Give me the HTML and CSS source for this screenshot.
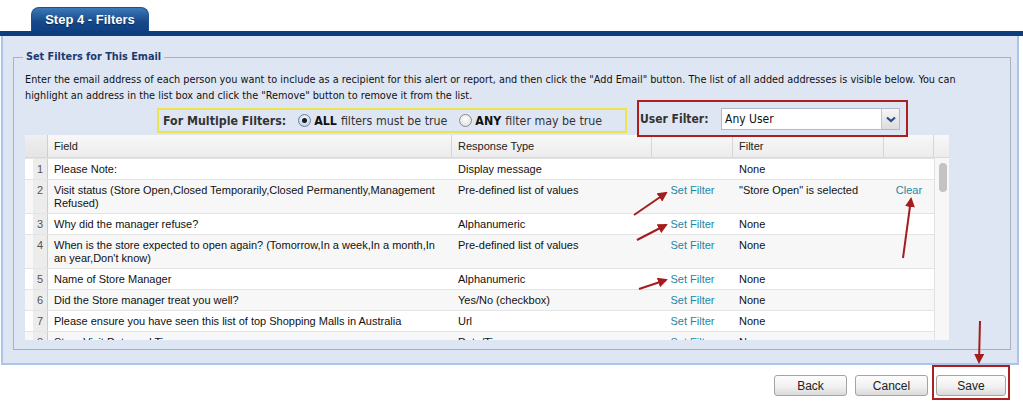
FILE: index.html
```html
<!DOCTYPE html>
<html lang="en">
<head>
	<meta charset="UTF-8">
	<title>Step 4 - Filters</title>
	<link rel="stylesheet" href="styles.css">
</head>
<body>
	<header class="tabs">
		<span class="tab">Step 4 - Filters</span>
	</header>
	<main class="panel">
		<fieldset class="filters">
			<legend>Set Filters for This Email</legend>
			<p class="intro">Enter the email address of each person you want to include as a recipient for this alert or report, and then click the "Add Email" button. The list of all added addresses is visible below. You can<br>highlight an address in the list box and click the "Remove" button to remove it from the list.</p>
			<div class="filter-row">
				<div class="multi">
					<b>For Multiple Filters:</b>
					<label><span class="radio on"></span><b>ALL</b> filters must be true</label>
					<label><span class="radio"></span><b>ANY</b> filter may be true</label>
				</div>
				<div class="user">
					<b>User Filter:</b>
					<div class="select">
						<span class="value">Any User</span>
						<span class="drop"><svg width="18" height="20" viewBox="0 0 18 20"><path d="M5 8.5l4 3.5l4-3.5" fill="none" stroke="#2c4b8c" stroke-width="2.2"/></svg></span>
					</div>
				</div>
			</div>
			<section class="grid">
				<div class="grid-head">
					<span class="num"></span>
					<span>Field</span>
					<span>Response Type</span>
					<span></span>
					<span>Filter</span>
					<span></span>
					<span class="last"></span>
				</div>
				<div class="grid-body">
					<div class="rows">
						<div class="row"><span class="num">1</span><span>Please Note:</span><span>Display message</span><span></span><span>None</span><span></span></div>
						<div class="row"><span class="num">2</span><span>Visit status (Store Open,Closed Temporarily,Closed Permanently,Management Refused)</span><span>Pre-defined list of values</span><a class="link">Set Filter</a><span>"Store Open" is selected</span><a class="link">Clear</a></div>
						<div class="row"><span class="num">3</span><span>Why did the manager refuse?</span><span>Alphanumeric</span><a class="link">Set Filter</a><span>None</span><span></span></div>
						<div class="row"><span class="num">4</span><span>When is the store expected to open again? (Tomorrow,In a week,In a month,In an year,Don't know)</span><span>Pre-defined list of values</span><a class="link">Set Filter</a><span>None</span><span></span></div>
						<div class="row"><span class="num">5</span><span>Name of Store Manager</span><span>Alphanumeric</span><a class="link">Set Filter</a><span>None</span><span></span></div>
						<div class="row"><span class="num">6</span><span>Did the Store manager treat you well?</span><span>Yes/No (checkbox)</span><a class="link">Set Filter</a><span>None</span><span></span></div>
						<div class="row"><span class="num">7</span><span>Please ensure you have seen this list of top Shopping Malls in Australia</span><span>Url</span><a class="link">Set Filter</a><span>None</span><span></span></div>
						<div class="row"><span class="num">8</span><span>Store Visit Date and Time</span><span>Date/Time</span><a class="link">Set Filter</a><span>None</span><span></span></div>
					</div>
					<div class="scroll"><span class="thumb"></span></div>
				</div>
			</section>
		</fieldset>
	</main>
	<nav class="actions">
		<button>Back</button>
		<button>Cancel</button>
		<div class="mark"><button>Save</button></div>
	</nav>
	<svg class="notes" width="1023" height="402" viewBox="0 0 1023 402">
		<defs>
			<marker id="head" viewBox="0 0 10 10" refX="8" refY="5" markerWidth="5" markerHeight="5" orient="auto">
				<path d="M0 0L10 5L0 10z" fill="#a61c1c"/>
			</marker>
		</defs>
		<g stroke="#a61c1c" stroke-width="2" fill="none" marker-end="url(#head)">
			<line x1="634" y1="215" x2="666" y2="193"/>
			<line x1="637" y1="240" x2="666" y2="225"/>
			<line x1="639" y1="289" x2="666" y2="280"/>
			<line x1="903" y1="258" x2="911" y2="199"/>
			<line x1="980" y1="321" x2="979" y2="362"/>
		</g>
	</svg>
</body>
</html>
```

FILE: styles.css
```css
* {margin:0;padding:0;box-sizing:border-box;}
body {width:1023px;height:402px;overflow:hidden;position:relative;background:#fff;font-family:"Liberation Sans", Arial, sans-serif;font-size:11px;color:#111;}

.tabs {height:36px;padding:7px 0 0 31px;border-bottom:5px solid #0e3d7f;display:flex;}
.tab {width:118px;height:24px;border-radius:8px 8px 0 0;border:1px solid #20508f;border-bottom:none;background:linear-gradient(#3c78b7, #17498a 60%, #0f4083);color:#fff;font-weight:bold;font-size:13px;line-height:23px;text-align:center;text-shadow:0 1px 1px #082a5c;}

.panel {width:1018px;margin-left:1px;padding:14px 6px 13px 10px;background:#dfe6f3;border:2px solid #a9c5ea;border-top:none;}
.filters {border:1px solid #a8b1c4;padding:0 10px 9px 11px;font-family:"DejaVu Sans Condensed", "DejaVu Sans", sans-serif;font-stretch:condensed;}
.filters legend {padding:0 3px;margin-left:-2px;font-size:10.8px;line-height:14px;font-weight:bold;color:#1c3a70;}
.intro {margin-top:8px;font-size:10.8px;line-height:16px;color:#111;}

.filter-row {display:flex;align-items:flex-start;gap:10px;height:35px;margin-top:-4px;position:relative;z-index:2;}
.multi {margin:8px 0 0 132px;width:470px;height:25px;border:2px solid #ece44c;display:flex;align-items:center;padding-left:4px;font-size:12.3px;color:#333;}
.multi b {color:#333;}
.multi label {display:flex;align-items:center;margin-left:12px;}
.multi label b {margin-right:4px;color:#111;}
.radio {width:13px;height:13px;border-radius:50%;border:1px solid #8c8c8c;background:radial-gradient(circle at 50% 35%, #fff, #d8d8d8);margin-right:3px;position:relative;}
.radio.on {border-color:#6a7f9e;background:radial-gradient(circle at 50% 35%, #f4f8ff, #b9cbe6);}
.radio.on::after {content:"";position:absolute;left:3px;top:3px;width:5px;height:5px;border-radius:50%;background:#1c1c1c;}
.user {width:271px;height:37px;border:2px solid #ad1e1e;display:flex;align-items:center;padding-left:1px;font-size:12px;color:#333;}
.select {margin-left:auto;margin-right:6px;width:179px;height:22px;border:1px solid #b4b9c8;background:#fff;display:flex;align-items:center;}
.select .value {flex:1;padding-left:3px;font-size:12px;color:#111;}
.select .drop {width:18px;height:20px;border-left:1px solid #c2c6d0;background:linear-gradient(#f6f6f6, #dcdcdc);}

.grid {width:924px;height:205px;overflow:hidden;background:#fff;font-family:"Liberation Sans", Arial, sans-serif;font-size:11px;color:#111;}
.grid-head {display:grid;grid-template-columns:23px 404px 200px 81px 151px 50px 15px;height:23px;background:linear-gradient(#f8f8f8, #ececec);border-bottom:1px solid #d8d8d8;}
.grid-head span {border-right:1px solid #d6d6d6;padding-left:6px;line-height:22px;color:#222;}
.grid-head span.last {border-right:none;}
.grid-head .num {background:linear-gradient(#f0f0f0, #e4e4e4);border-right:1px solid #cfcfcf;}
.grid-body {display:flex;height:182px;}
.rows {width:909px;}
.row {display:grid;grid-template-columns:23px 404px 200px 81px 151px 50px;border-top:1px solid #e4e4e4;background:#fff;}
.row:nth-child(even) {background:#f7f7f7;}
.row > * {padding:4px 6px 3px;line-height:13px;}
.row .num {padding:4px 0 3px 8px;text-align:center;color:#555;background:linear-gradient(90deg, transparent 8px, #ececec 8px);border-right:1px solid #cdcdcd;}
.row .link {text-align:center;color:#1b87a6;padding:4px 0 3px;}
.scroll {width:15px;background:#f7f7f7;border-left:1px solid #e2e2e2;padding:5px 0 0 4px;}
.thumb {display:block;width:8px;height:29px;border-radius:4px;background:#c3c3c3;}

.actions {display:flex;justify-content:flex-end;align-items:flex-end;gap:8px;padding-right:13px;height:35px;}
.actions button {width:73px;height:21px;border:1px solid #a4a4a4;border-radius:3px;background:linear-gradient(#fdfdfd, #f1f1f1 55%, #dadada);font-family:"Liberation Sans", Arial, sans-serif;font-size:12px;color:#222;margin-bottom:4px;}
.mark {margin-left:-4px;border:2px solid #ad1e1e;padding:8px 2px 2px;}
.mark button {width:70px;margin:0;}

.notes {position:absolute;left:0;top:0;pointer-events:none;z-index:5;}
```
